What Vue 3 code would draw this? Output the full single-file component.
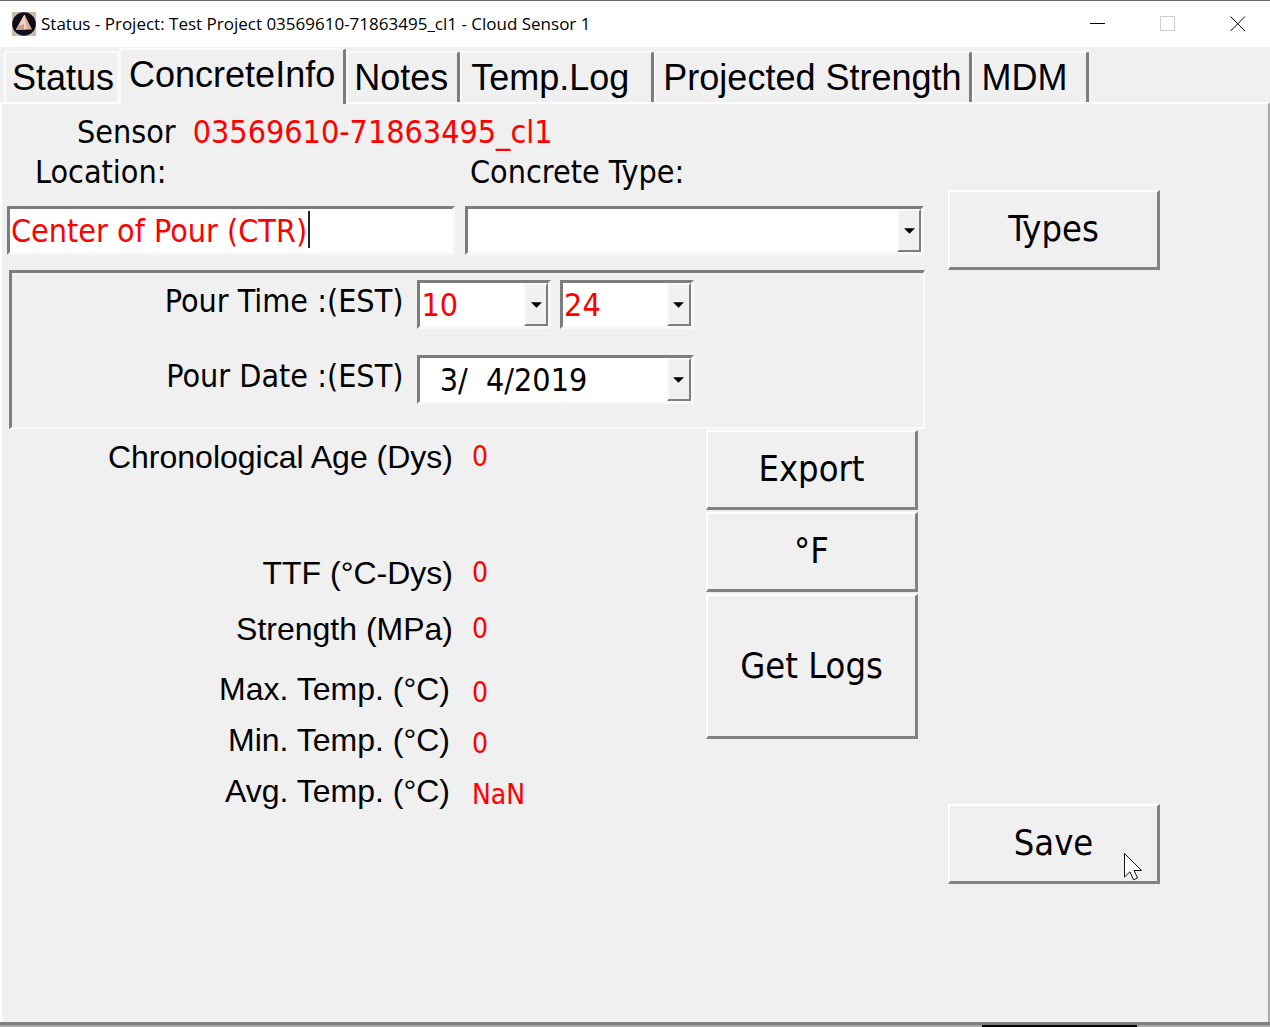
<script setup>
import { ref } from 'vue'

const tabs = ['Status', 'ConcreteInfo', 'Notes', 'Temp.Log', 'Projected Strength', 'MDM']
const activeTab = ref('ConcreteInfo')

const location = ref('Center of Pour (CTR)')
const concreteType = ref('')
const hour = ref('10')
const minute = ref('24')
const pourDate = ref('  3/  4/2019')

const readingGroups = [
  { name: 'age', rows: [{ id: 'age', label: 'Chronological Age (Dys)', value: '0' }] },
  {
    name: 'maturity',
    rows: [
      { id: 'ttf', label: 'TTF (°C-Dys)', value: '0' },
      { id: 'strength', label: 'Strength (MPa)', value: '0' },
    ],
  },
  {
    name: 'temps',
    rows: [
      { id: 'max', label: 'Max. Temp. (°C)', value: '0' },
      { id: 'min', label: 'Min. Temp. (°C)', value: '0' },
      { id: 'avg', label: 'Avg. Temp. (°C)', value: 'NaN' },
    ],
  },
]
</script>

<template>
  <div class="window">
    <header class="titlebar">
      <svg class="app-icon" viewBox="0 0 24 24" aria-hidden="true">
        <rect width="24" height="24" fill="#cdbba6" />
        <circle cx="12" cy="12" r="11.800" fill="#0e0d1c" />
        <path d="M12.500 2.500 20 17.500H4z" fill="#d8b09a" />
        <path d="M12.500 2.500 14.500 17.500H4z" fill="#f0d3c0" />
        <path d="M6 14 12 12v5.500H4z" fill="#c79f8b" />
      </svg>
      <h1 class="title">Status - Project: Test Project 03569610-71863495_cl1 - Cloud Sensor 1</h1>
      <div class="controls">
        <button type="button" aria-label="Minimize">
          <svg viewBox="0 0 16 16"><path d="M0 7.500H15" stroke="#000" /></svg>
        </button>
        <button type="button" aria-label="Maximize" disabled>
          <svg viewBox="0 0 16 16"><path d="M.5.5h14v14H.5z" fill="none" stroke="#ccc" /></svg>
        </button>
        <button type="button" aria-label="Close">
          <svg viewBox="0 0 16 16"><path d="M.5.5l14.500 14.500M15 .5L.5 15" stroke="#000" /></svg>
        </button>
      </div>
    </header>

    <nav class="tabs" role="tablist">
      <button
        v-for="tab in tabs"
        :key="tab"
        type="button"
        role="tab"
        class="tab"
        :class="{ active: tab === activeTab }"
        :aria-selected="tab === activeTab"
        @click="activeTab = tab"
      >{{ tab }}</button>
    </nav>

    <main class="panel">
      <section class="fields">
        <p class="sensor"><span>Sensor</span><span class="red">03569610-71863495_cl1</span></p>
        <div class="field">
          <label class="location-label" for="location">Location:</label>
          <div class="box">
            <input id="location" v-model="location" class="red" type="text" />
            <span class="caret"></span>
          </div>
        </div>
        <div class="field">
          <label class="type-label" for="type">Concrete Type:</label>
          <div class="box">
            <select id="type" v-model="concreteType"><option value=""></option></select>
            <span class="arrow"><svg viewBox="0 0 12 6"><path d="M0 0h12L6 6z" /></svg></span>
          </div>
        </div>
      </section>

      <button type="button" class="push types">Types</button>

      <section class="pour">
        <label for="hour">Pour Time :(EST)</label>
        <div class="time">
          <div class="box">
            <select id="hour" v-model="hour" class="red"><option>10</option></select>
            <span class="arrow"><svg viewBox="0 0 12 6"><path d="M0 0h12L6 6z" /></svg></span>
          </div>
          <div class="box">
            <select v-model="minute" class="red" aria-label="Pour minute"><option>24</option></select>
            <span class="arrow"><svg viewBox="0 0 12 6"><path d="M0 0h12L6 6z" /></svg></span>
          </div>
        </div>
        <label for="date">Pour Date :(EST)</label>
        <div class="box">
          <input id="date" v-model="pourDate" type="text" />
          <span class="arrow"><svg viewBox="0 0 12 6"><path d="M0 0h12L6 6z" /></svg></span>
        </div>
      </section>

      <section class="results">
        <div class="readings">
          <div v-for="group in readingGroups" :key="group.name" class="group" :class="group.name">
            <div v-for="row in group.rows" :key="row.id" class="reading">
              <label :for="row.id">{{ row.label }}</label>
              <output :id="row.id" class="red">{{ row.value }}</output>
            </div>
          </div>
        </div>
        <div class="actions">
          <button type="button" class="push">Export</button>
          <button type="button" class="push">°F</button>
          <button type="button" class="push tall">Get Logs</button>
        </div>
      </section>

      <div class="save">
        <button type="button" class="push">Save</button>
        <svg class="pointer" viewBox="0 0 19 28" aria-hidden="true">
          <path
            d="M.5.5V24l5.500-5.200 3.500 8 4-1.800-3.500-7.500h7.500z"
            fill="#fff"
            stroke="#101020"
          />
        </svg>
      </div>
    </main>
    <footer class="edge"><span></span></footer>
  </div>
</template>

<style>
body {
  margin: 0;
  background: #f0f0f0;
}
</style>

<style scoped>
* {
  box-sizing: border-box;
}

.window {
  display: flex;
  flex-direction: column;
  min-height: 100vh;
  background: #f0f0f0;
  color: #000;
  font: 32px/40px "DejaVu Sans Condensed", "DejaVu Sans", sans-serif;
  font-stretch: condensed;
}

button,
input,
select {
  margin: 0;
  color: inherit;
  font: inherit;
}

.red {
  color: #f00;
}

.titlebar {
  display: flex;
  align-items: center;
  height: 47px;
  padding-left: 12px;
  border-top: 1px solid #6b6b6b;
  background: #fff;
}

.app-icon {
  width: 24px;
  height: 24px;
}

.title {
  flex: 1;
  margin: 0 0 0 5px;
  font: 400 17px/24px "Open Sans", "Noto Sans", sans-serif;
  white-space: nowrap;
}

.controls {
  display: flex;
}

.controls button {
  display: flex;
  align-items: center;
  justify-content: center;
  width: 70px;
  height: 46px;
  padding: 0 0 0 5px;
  border: 0;
  background: none;
}

.controls svg {
  width: 16px;
  height: 16px;
}

.tabs {
  display: flex;
  align-items: flex-end;
  height: 55px;
  padding-left: 4px;
}

.tab {
  height: 51px;
  padding: 0 8px;
  border: 2px solid #fafafa;
  border-right: 3px solid #7d7d7d;
  border-bottom: 0;
  border-radius: 3px 3px 0 0;
  background: #f0f0f0;
  font: 36px/48px "Liberation Sans", Arial, sans-serif;
  white-space: nowrap;
}

.tab:first-child {
  padding: 0 3px 0 6px;
  border-right: 2px solid #fafafa;
}

.tab.active {
  z-index: 1;
  align-self: flex-start;
  height: 56px;
  margin-top: 1px;
  padding-bottom: 4px;
}

.tab:nth-child(3) {
  padding: 0 9px 0 6px;
}

.tab:nth-child(4) {
  padding: 0 22px 0 9px;
}

.tab:nth-child(5) {
  padding: 0 7px;
}

.tab:nth-child(6) {
  padding: 0 18px 0 8px;
}

.panel {
  flex: 1;
  display: grid;
  grid-template-columns: minmax(0, 1fr) 212px;
  grid-template-rows: 166px 160px 454px;
  column-gap: 23px;
  padding: 0 108px 0 5px;
  border: 2px solid #fff;
  border-right-color: #a8a8a8;
  border-bottom: 0;
}

.fields {
  display: grid;
  grid-template-columns: 448fr 459fr;
  align-content: start;
  column-gap: 10px;
  padding: 8px 1px 0 0;
}

.sensor {
  display: flex;
  grid-column: 1 / -1;
  gap: 17px;
  margin: 0;
  padding-left: 70px;
}

.field label {
  display: block;
  margin-bottom: 14px;
}

.location-label {
  padding-left: 28px;
}

.type-label {
  padding-left: 5px;
}

.box {
  position: relative;
  height: 49px;
  border: 3px solid #7d7d7d;
  border-right-color: #f8f8f8;
  border-bottom-color: #f8f8f8;
  background: #fff;
}

.box input,
.box select {
  display: block;
  width: 100%;
  height: 43px;
  padding: 0 0 0 1px;
  border: 0;
  border-radius: 0;
  outline: 0;
  background: transparent;
  appearance: none;
}

.caret {
  position: absolute;
  top: 2px;
  left: 298px;
  width: 2px;
  height: 37px;
  background: #222;
}

.arrow {
  position: absolute;
  top: 0;
  right: 0;
  display: flex;
  align-items: center;
  justify-content: center;
  width: 24px;
  height: 43px;
  border: 2px solid #f8f8f8;
  border-right-color: #7d7d7d;
  border-bottom-color: #7d7d7d;
  background: #f0f0f0;
  pointer-events: none;
}

.arrow svg {
  width: 11px;
  height: 6px;
}

.push {
  display: block;
  width: 100%;
  height: 80px;
  padding: 0 0 1px;
  border: 2px solid #fff;
  border-right: 3px solid #828282;
  border-bottom: 3px solid #828282;
  background: #f0f0f0;
  font-size: 36px;
  line-height: 44px;
}

.types {
  align-self: end;
}

.pour {
  display: grid;
  grid-template-columns: 391fr 276fr 215fr;
  align-content: start;
  gap: 26px 14px;
  height: 159px;
  margin-left: 2px;
  padding-top: 7px;
  border: 3px solid #7d7d7d;
  border-right: 2px solid #fafafa;
  border-bottom: 2px solid #fafafa;
}

.pour label {
  grid-column: 1;
  line-height: 42px;
  text-align: right;
}

.time {
  display: grid;
  grid-template-columns: 1fr 1fr;
  gap: 9px;
}

.results {
  display: flex;
  grid-column: 1;
  justify-content: space-between;
  padding-right: 7px;
}

.readings {
  flex: 1;
  padding-top: 5px;
  font: 32px/44px "Liberation Sans", Arial, sans-serif;
}

.group {
  display: grid;
  row-gap: 7px;
}

.maturity {
  row-gap: 12px;
  margin: 72px 0 16px;
}

.reading {
  display: grid;
  grid-template-columns: 446px 1fr;
  column-gap: 19px;
}

.reading label {
  text-align: right;
}

.reading output {
  font: 28px/44px "DejaVu Sans Condensed", "DejaVu Sans", sans-serif;
  font-stretch: condensed;
}

.temps label {
  padding-right: 3px;
}

.temps output {
  padding-top: 8px;
  line-height: 36px;
}

.actions {
  display: flex;
  flex-direction: column;
  gap: 2px;
  width: 212px;
}

.tall {
  height: 145px;
}

.save {
  position: relative;
  grid-column: 2;
  align-self: end;
}

.pointer {
  position: absolute;
  right: 17px;
  bottom: 3px;
  width: 19px;
  height: 28px;
}

.edge {
  height: 5px;
  border-top: 3px solid #808080;
  background: #a8a8a8;
}

.edge span {
  display: block;
  width: 155px;
  height: 2px;
  margin-left: auto;
  margin-right: 133px;
  background: #000;
}
</style>
